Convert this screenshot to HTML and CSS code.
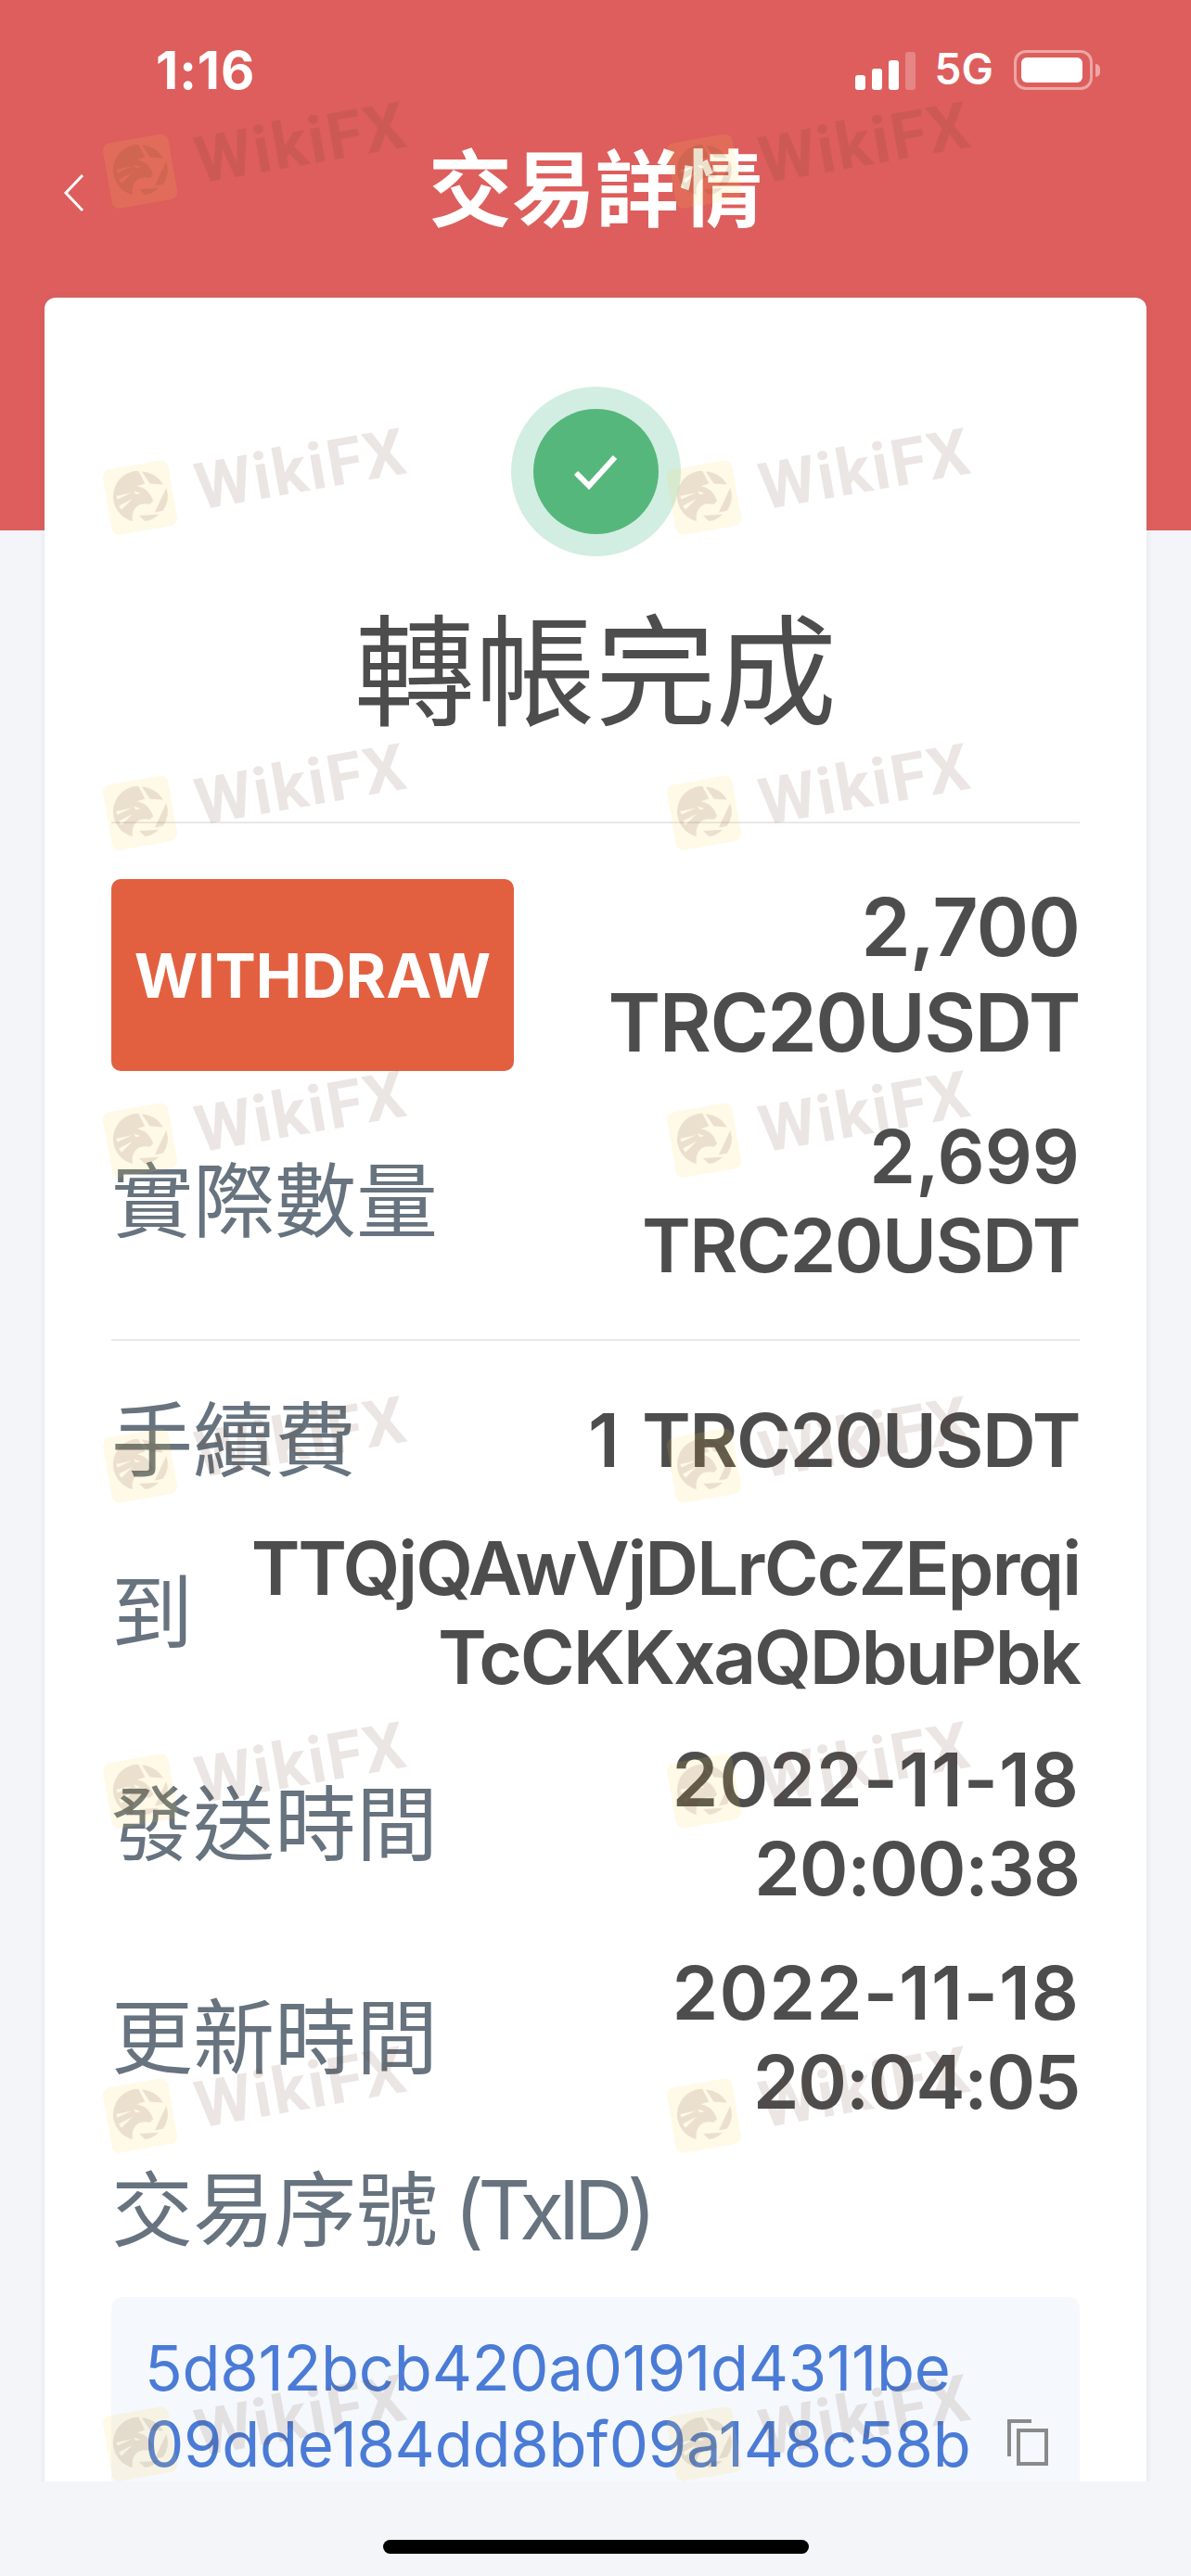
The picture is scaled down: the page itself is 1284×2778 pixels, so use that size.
FILE: index.html
```html
<!DOCTYPE html>
<html lang="zh-Hant">
<head>
    <meta charset="UTF-8">
    <title>交易詳情</title>
    <link rel="stylesheet" href="styles.css">
</head>
<body>
    <svg class="defs" width="0" height="0">
        <symbol id="wfx-logo" viewBox="0 0 204 204">
            <rect width="204" height="204" rx="26" fill="rgba(255,205,70,.13)"/>
            <g transform="translate(-33 -33) rotate(10 135 135)" fill="rgba(100,60,40,.13)">
                <path d="M140 55 A78 78 0 0 1 205 95 L165 92 Z"/>
                <path d="M215 105 A78 78 0 0 1 205 175 L180 180 Z"/>
                <path d="M192 186 A78 78 0 0 1 150 207 L132 190 Z"/>
                <path fill-rule="evenodd" d="M130 53 A78 78 0 0 0 70 180 Q85 200 112 207 Q108 180 122 165 Q135 150 165 155 L175 145 Q160 105 125 100 L150 92 Z M115 115 L137 122 L122 125 Z M62 130 L110 120 L66 140 Z M70 160 L112 138 L78 172 Z"/>
            </g>
        </symbol>
    </svg>

    <div class="page">
        <div class="status-bar">
            <span class="clock">1:16</span>
            <div class="status-right">
                <div class="signal">
                    <i class="b1"></i><i class="b2"></i><i class="b3"></i><i class="b4"></i>
                </div>
                <span class="net">5G</span>
                <div class="battery"><div class="battery-fill"></div></div>
                <div class="battery-nub"></div>
            </div>
        </div>

        <div class="nav">
            <svg class="back" width="24" height="42" viewBox="0 0 24 42">
                <path d="M21 2 L3 21 L21 40" fill="none" stroke="#fff" stroke-width="3"/>
            </svg>
            <h1>交易詳情</h1>
        </div>

        <div class="card">
            <div class="done-icon">
                <div class="done-inner">
                    <svg width="48" height="40" viewBox="0 0 48 40">
                        <path d="M3 21 L17 35 L45 4" fill="none" stroke="#fff" stroke-width="6"/>
                    </svg>
                </div>
            </div>
            <h2>轉帳完成</h2>

            <div class="rule"></div>

            <div class="row row-type">
                <div class="tag">WITHDRAW</div>
                <div class="value big"><span class="num">2,700</span><br>TRC20USDT</div>
            </div>
            <div class="row row-real">
                <div class="label">實際數量</div>
                <div class="value"><span class="num">2,699</span><br>TRC20USDT</div>
            </div>

            <div class="rule rule-two"></div>

            <div class="row row-fee">
                <div class="label">手續費</div>
                <div class="value">1 TRC20USDT</div>
            </div>
            <div class="row row-to">
                <div class="label">到</div>
                <div class="value address">TTQjQAwVjDLrCcZEprqi<br>TcCKKxaQDbuPbk</div>
            </div>
            <div class="row row-sent">
                <div class="label">發送時間</div>
                <div class="value date">2022-11-18<br><span class="time">20:00:38</span></div>
            </div>
            <div class="row row-updated">
                <div class="label">更新時間</div>
                <div class="value date">2022-11-18<br><span class="time">20:04:05</span></div>
            </div>

            <div class="label txid-label">交易序號 <span class="txid-latin">(TxID)</span></div>
            <div class="txid-box">
                <div class="txid">5d812bcb420a0191d4311be<br>09dde184dd8bf09a148c58b</div>
                <svg class="copy" width="44" height="50" viewBox="0 0 44 50">
                    <path d="M26 2 H2 V40" fill="none" stroke="#8a8a8a" stroke-width="4"/>
                    <rect x="12" y="12" width="30" height="36" fill="none" stroke="#8a8a8a" stroke-width="4"/>
                </svg>
            </div>
        </div>

        <!-- watermark tiled over the whole screen -->
        <div class="watermarks">
            <div class="wm"><svg class="wm-logo"><use href="#wfx-logo"/></svg><span>WikiFX</span></div>
            <div class="wm"><svg class="wm-logo"><use href="#wfx-logo"/></svg><span>WikiFX</span></div>
            <div class="wm"><svg class="wm-logo"><use href="#wfx-logo"/></svg><span>WikiFX</span></div>
            <div class="wm"><svg class="wm-logo"><use href="#wfx-logo"/></svg><span>WikiFX</span></div>
            <div class="wm"><svg class="wm-logo"><use href="#wfx-logo"/></svg><span>WikiFX</span></div>
            <div class="wm"><svg class="wm-logo"><use href="#wfx-logo"/></svg><span>WikiFX</span></div>
            <div class="wm"><svg class="wm-logo"><use href="#wfx-logo"/></svg><span>WikiFX</span></div>
            <div class="wm"><svg class="wm-logo"><use href="#wfx-logo"/></svg><span>WikiFX</span></div>
            <div class="wm"><svg class="wm-logo"><use href="#wfx-logo"/></svg><span>WikiFX</span></div>
            <div class="wm"><svg class="wm-logo"><use href="#wfx-logo"/></svg><span>WikiFX</span></div>
            <div class="wm"><svg class="wm-logo"><use href="#wfx-logo"/></svg><span>WikiFX</span></div>
            <div class="wm"><svg class="wm-logo"><use href="#wfx-logo"/></svg><span>WikiFX</span></div>
            <div class="wm"><svg class="wm-logo"><use href="#wfx-logo"/></svg><span>WikiFX</span></div>
            <div class="wm"><svg class="wm-logo"><use href="#wfx-logo"/></svg><span>WikiFX</span></div>
            <div class="wm"><svg class="wm-logo"><use href="#wfx-logo"/></svg><span>WikiFX</span></div>
            <div class="wm"><svg class="wm-logo"><use href="#wfx-logo"/></svg><span>WikiFX</span></div>
        </div>
    </div>

    <div class="home-area">
        <div class="home-bar"></div>
    </div>
</body>
</html>
```

FILE: styles.css
```css
* {
    box-sizing: border-box;
}
body {
    margin: 0;
    width: 1284px;
    height: 2778px;
    overflow: hidden;
    background: #f3f5f9;
    font-family: Inter, "Noto Sans CJK TC", sans-serif;
}
.defs {
    position: absolute;
}
.page {
    position: relative;
    height: 2676px;
    overflow: hidden;
    background: linear-gradient(#dd5e5c 572px, #f3f5f9 572px);
}

/* status bar */
.status-bar {
    height: 100px;
    padding: 46px 98px 0 168px;
    display: flex;
    justify-content: space-between;
    color: #fff;
}
.clock {
    font-size: 56px;
    font-weight: 700;
    line-height: 60px;
    letter-spacing: 1px;
}
.status-right {
    display: flex;
    align-items: flex-end;
    height: 51px;
}
.signal {
    display: flex;
    align-items: flex-end;
    gap: 7px;
    margin-right: 21px;
}
.signal i {
    display: block;
    width: 11px;
    background: #fff;
    border-radius: 3px;
}
.signal .b1 { height: 16px; }
.signal .b2 { height: 23px; }
.signal .b3 { height: 32px; }
.signal .b4 { height: 41px; background: rgba(255, 255, 255, 0.25); }
.net {
    font-size: 46px;
    font-weight: 600;
    line-height: 46px;
    margin-right: 22px;
}
.battery {
    width: 85px;
    height: 43px;
    padding: 5px;
    border: 3px solid rgba(255, 255, 255, 0.45);
    border-radius: 13px;
}
.battery-fill {
    width: 66px;
    height: 27px;
    background: #fff;
    border-radius: 6px;
}
.battery-nub {
    width: 5px;
    height: 14px;
    margin: 0 0 14px 3px;
    background: rgba(255, 255, 255, 0.45);
    border-radius: 0 5px 5px 0;
}

/* nav */
.nav {
    position: relative;
    height: 221px;
    text-align: center;
}
.back {
    position: absolute;
    left: 68px;
    top: 87px;
}
h1 {
    margin: 0;
    padding-top: 50px;
    font-size: 90px;
    line-height: 110px;
    font-weight: 700;
    color: #fff;
}

/* card */
.card {
    margin: 0 48px;
    height: 2400px;
    padding: 96px 72px 0;
    background: #fff;
    border-radius: 12px;
    box-shadow: 0 0 6px rgba(120, 120, 140, 0.15);
}
.done-icon {
    width: 183px;
    height: 183px;
    margin: 0 auto;
    padding: 24px;
    background: #d2eee2;
    border-radius: 50%;
}
.done-inner {
    width: 135px;
    height: 135px;
    display: flex;
    align-items: center;
    justify-content: center;
    background: #56b77c;
    border-radius: 50%;
}
h2 {
    margin: 40px 0 0;
    height: 245px;
    text-align: center;
    font-size: 130px;
    line-height: 170px;
    font-weight: 400;
    color: #4d4d4d;
}
.rule {
    height: 2px;
    margin-top: 1px;
    background: #e8e8e8;
}
.row {
    display: flex;
    justify-content: space-between;
    align-items: center;
}
.label {
    font-size: 88px;
    line-height: 100px;
    color: #67737e;
}
.value {
    font-size: 80px;
    line-height: 96px;
    font-weight: 600;
    text-align: right;
    letter-spacing: -1.5px;
    color: #4d4d4d;
}
.value.big {
    font-size: 86px;
    line-height: 103px;
}
.value.address {
    letter-spacing: -2.1px;
}
.value.date {
    letter-spacing: 1px;
}
.num {
    letter-spacing: 0;
}
.value.big .num {
    letter-spacing: -1px;
}
.time {
    letter-spacing: -1.3px;
}
.row-type {
    margin-top: 60px;
}
.tag {
    width: 434px;
    height: 207px;
    display: flex;
    align-items: center;
    justify-content: center;
    background: #e26040;
    border-radius: 10px;
    color: #fff;
    font-size: 66px;
    font-weight: 700;
}
.row-real {
    margin-top: 44px;
}
.rule-two {
    margin-top: 53px;
}
.row-fee {
    margin-top: 57px;
}
.row-fee .value {
    word-spacing: 7px;
}
.row-to {
    margin-top: 40px;
}
.row-sent {
    margin-top: 36px;
}
.row-updated {
    margin-top: 38px;
}
.txid-label {
    margin-top: 40px;
    word-spacing: -7px;
}
.txid-latin {
    letter-spacing: -6.5px;
}
.txid-box {
    display: flex;
    justify-content: space-between;
    align-items: flex-start;
    height: 300px;
    margin-top: 44px;
    padding: 36px 34px 0 36px;
    background: #f5f8fd;
    border-radius: 12px;
}
.txid {
    font-size: 67px;
    line-height: 82px;
    letter-spacing: -0.25px;
    color: #4a7bd6;
}
.copy {
    margin-top: 96px;
}

/* watermark */
.watermarks {
    position: absolute;
    left: 126px;
    top: 130px;
    display: grid;
    grid-template-columns: repeat(2, 608px);
    grid-template-rows: 352px 340px 353px 351px 351px 350px 354px 351px;
    pointer-events: none;
}
.wm {
    display: flex;
    align-items: center;
    gap: 25px;
    height: 120px;
    transform: rotate(-10deg);
    transform-origin: 0 100%;
}
.wm-logo {
    width: 72px;
    height: 72px;
    flex: none;
}
.wm span {
    font-family: Roboto, sans-serif;
    font-size: 70px;
    font-weight: 700;
    letter-spacing: 2px;
    color: rgba(100, 60, 40, 0.13);
}

/* bottom */
.home-area {
    height: 102px;
    padding-top: 63px;
}
.home-bar {
    width: 459px;
    height: 15px;
    margin: 0 auto;
    background: #000;
    border-radius: 8px;
}
```
